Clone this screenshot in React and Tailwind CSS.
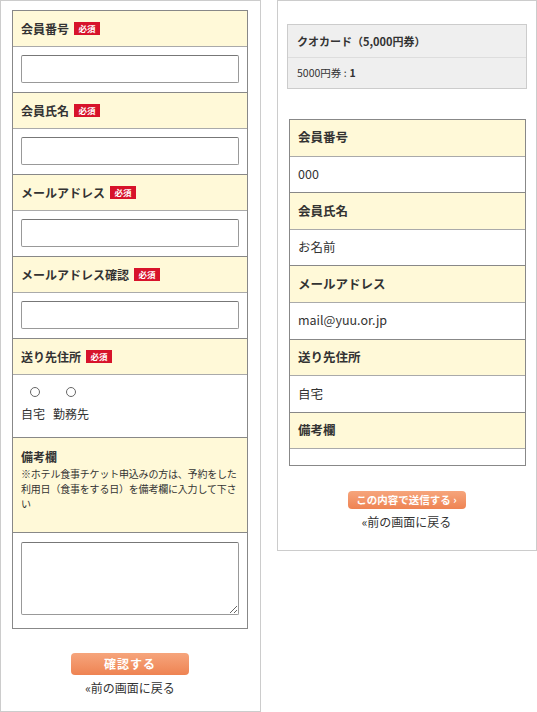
const jp = { fontFamily: '"Noto Sans CJK JP", "Noto Sans", sans-serif' };

function Badge() {
    return (
        <span className="ml-[5px] inline-flex h-[13px] w-[26px] items-center justify-center bg-[#d7132b] text-[8.5px] font-bold leading-none text-white">
            必須
        </span>
    );
}

function Head({label, required = true}) {
    return (
        <div className="flex h-[36px] items-center border-b border-[#aaa] bg-[#fff9d8] px-[8px] text-[12px] font-bold text-[#333]">
            {label}
            {required && <Badge/>}
        </div>
    );
}

function InputRow() {
    return (
        <div className="border-b border-[#888] bg-white px-[8px] pb-[9px] pt-[8px]">
            <input className="block h-[28px] w-[218px] rounded-[2px] border border-[#999] border-t-[#777] bg-white"/>
        </div>
    );
}

function EntryForm() {
    return (
        <div className="h-[712px] w-[261px] shrink-0 border border-[#ccc] bg-white pl-[11px] pt-[9px]">
            <div className="w-[236px] border border-[#888]">
                <Head label="会員番号"/>
                <InputRow/>
                <Head label="会員氏名"/>
                <InputRow/>
                <Head label="メールアドレス"/>
                <InputRow/>
                <Head label="メールアドレス確認"/>
                <InputRow/>
                <Head label="送り先住所"/>
                <div className="flex h-[63px] items-start gap-[8px] border-b border-[#888] bg-white px-[8px] pt-[12px] text-[12px] text-[#333]">
                    <label className="flex flex-col items-center">
                        <span className="ml-[4px] block h-[10px] w-[10px] rounded-full border border-[#666]"/>
                        <span className="mt-[8px]">自宅</span>
                    </label>
                    <label className="flex flex-col items-center">
                        <span className="block h-[10px] w-[10px] rounded-full border border-[#666]"/>
                        <span className="mt-[8px]">勤務先</span>
                    </label>
                </div>
                <div className="h-[95px] border-b border-[#888] bg-[#fff9d8] px-[8px] pt-[10px] text-[#333]">
                    <div className="text-[12px] font-bold leading-[18px]">備考欄</div>
                    <p className="text-[10px] leading-[15px] tracking-[-0.2px]">
                        ※ホテル食事チケット申込みの方は、予約をした利用日（食事をする日）を備考欄に入力して下さい
                    </p>
                </div>
                <div className="bg-white px-[8px] pb-[13px] pt-[9px]">
                    <textarea className="block h-[73px] w-[218px] resize rounded-[2px] border border-[#999] border-t-[#777]"/>
                </div>
            </div>
            <div className="mt-[24px] flex flex-col items-center pr-[12px]">
                <button className="h-[22px] w-[118px] rounded-[4px] bg-gradient-to-b from-[#f6a57c] to-[#ee8352] text-[12px] font-bold tracking-[1px] text-white">
                    確認する
                </button>
                <a className="mt-[4px] text-[12px] text-[#333]">«前の画面に戻る</a>
            </div>
        </div>
    );
}

function ConfirmRow({label, value}) {
    return (
        <>
            <div className="flex h-[36.6px] items-center border-b border-[#aaa] bg-[#fff9d8] px-[8px] text-[12.5px] font-bold text-[#333]">
                {label}
            </div>
            <div className="flex h-[36.6px] items-center border-b border-[#888] bg-white px-[8px] text-[12.5px] text-[#333]">
                {value}
            </div>
        </>
    );
}

function ConfirmPanel() {
    return (
        <div className="h-[551px] w-[260px] shrink-0 border border-[#ccc] bg-white pl-[9px] pt-[23px]">
            <div className="w-[240px] border border-[#ccc] bg-[#efefef] text-[#333]">
                <div className="flex h-[33px] items-center border-b border-[#ddd] px-[9px] text-[11px] font-bold">
                    クオカード（5,000円券）
                </div>
                <div className="flex h-[30px] items-center px-[9px] text-[10.5px]">
                    5000円券 : <b className="ml-[3px]">1</b>
                </div>
            </div>
            <div className="ml-[2px] mt-[30px] w-[237px] border border-b-0 border-[#888]">
                <ConfirmRow label="会員番号" value="000"/>
                <ConfirmRow label="会員氏名" value="お名前"/>
                <ConfirmRow label="メールアドレス" value="mail@yuu.or.jp"/>
                <ConfirmRow label="送り先住所" value="自宅"/>
                <div className="flex h-[36.6px] items-center border-b border-[#aaa] bg-[#fff9d8] px-[8px] text-[12.5px] font-bold text-[#333]">
                    備考欄
                </div>
                <div className="h-[17px] border-b border-[#888] bg-white"/>
            </div>
            <div className="mt-[25px] flex flex-col items-center pr-[10px]">
                <button className="h-[18px] w-[118px] rounded-[4px] bg-gradient-to-b from-[#f6a57c] to-[#ee8352] text-[10.5px] font-bold leading-none text-white">
                    この内容で送信する ›
                </button>
                <a className="mt-[4px] text-[12px] text-[#333]">«前の画面に戻る</a>
            </div>
        </div>
    );
}

export default function App() {
    return (
        <div className="flex h-[712px] w-[537px] items-start gap-[16px] overflow-hidden bg-white" style={jp}>
            <EntryForm/>
            <ConfirmPanel/>
        </div>
    );
}
